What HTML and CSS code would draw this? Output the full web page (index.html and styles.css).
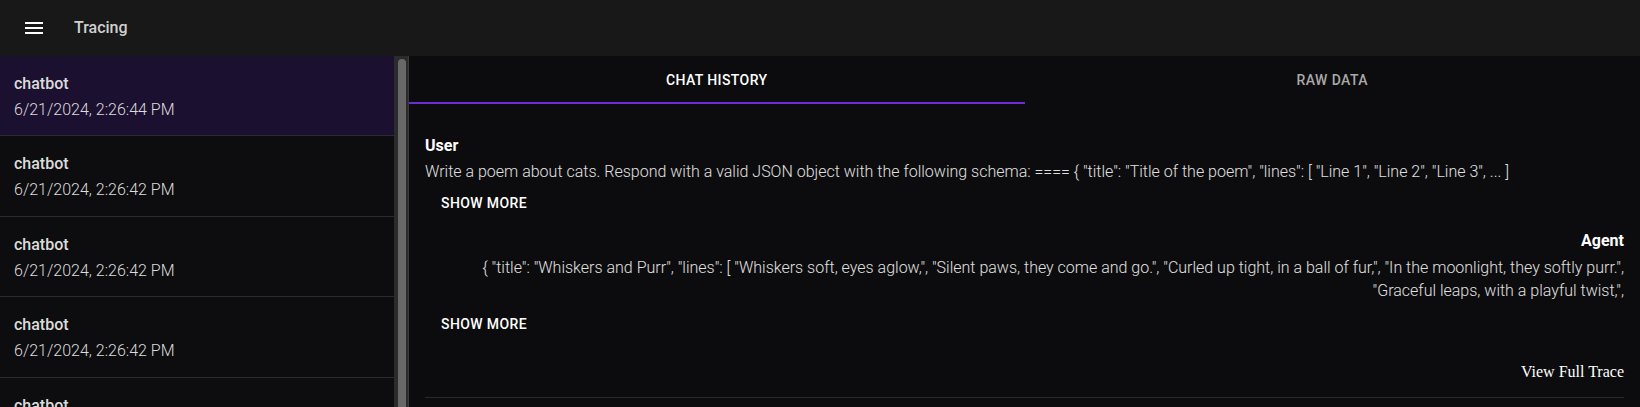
FILE: index.html
```html
<!DOCTYPE html>
<html lang="en">
<head>
<meta charset="utf-8">
<title>Tracing</title>
<link rel="stylesheet" href="styles.css">
</head>
<body>
<header class="appbar">
  <button class="menu-btn" aria-label="menu">
    <svg viewBox="0 0 24 24" width="24" height="24"><path fill="#fff" d="M3 18h18v-2H3zm0-5h18v-2H3zm0-7v2h18V6z"/></svg>
  </button>
  <div class="app-title">Tracing</div>
</header>
<div class="layout">
  <aside class="sidebar">
    <div class="trace-item selected"><div class="trace-name">chatbot</div><div class="trace-date">6/21/2024, 2:26:44 PM</div></div>
    <div class="trace-item"><div class="trace-name">chatbot</div><div class="trace-date">6/21/2024, 2:26:42 PM</div></div>
    <div class="trace-item"><div class="trace-name">chatbot</div><div class="trace-date">6/21/2024, 2:26:42 PM</div></div>
    <div class="trace-item"><div class="trace-name">chatbot</div><div class="trace-date">6/21/2024, 2:26:42 PM</div></div>
    <div class="trace-item"><div class="trace-name">chatbot</div><div class="trace-date">6/21/2024, 2:26:42 PM</div></div>
  </aside>
  <div class="scrolltrack"><div class="scrollthumb"></div></div>
  <main class="main">
    <nav class="tabs">
      <div class="tab active">Chat History</div>
      <div class="tab">Raw Data</div>
    </nav>
    <section class="chat">
      <div class="msg user">
        <div class="role">User</div>
        <div class="msg-text">Write a poem about cats. Respond with a valid JSON object with the following schema: ==== { "title": "Title of the poem", "lines": [ "Line 1", "Line 2", "Line 3", ... ]</div>
        <button class="show-more">Show More</button>
      </div>
      <div class="msg agent">
        <div class="role">Agent</div>
        <div class="msg-text">{ "title": "Whiskers and Purr", "lines": [ "Whiskers soft, eyes aglow,", "Silent paws, they come and go.", "Curled up tight, in a ball of fur,", "In the moonlight, they softly purr.", "Graceful leaps, with a playful twist,",</div>
        <button class="show-more">Show More</button>
      </div>
      <div class="trace-link-row"><button class="trace-link">View Full Trace</button></div>
      <div class="divider"></div>
    </section>
  </main>
</div>
</body>
</html>
```

FILE: styles.css
```css
* { box-sizing: border-box; }
html, body { margin: 0; padding: 0; }
body {
  width: 1640px;
  height: 407px;
  overflow: hidden;
  background: #0c0c0e;
  color: #e2e2e2;
  font-family: Roboto, "Liberation Sans", sans-serif;
}
.appbar {
  height: 56px;
  background: #181818;
  display: flex;
  align-items: center;
  padding-left: 22px;
}
.menu-btn {
  background: none;
  border: 0;
  padding: 0;
  width: 24px;
  height: 24px;
  display: flex;
}
.app-title {
  margin-left: 28px;
  font-size: 16px;
  font-weight: 500;
  color: #d0d0d0;
  margin-top: -2px;
}
.layout {
  display: flex;
  height: 351px;
}
.sidebar {
  width: 394px;
  flex: none;
  overflow: hidden;
  background: #0d0d0f;
}
.trace-item {
  height: 80.4px;
  padding: 16px 14px 0;
  border-bottom: 1px solid #2c2c2c;
  color: #dcdcdc;
}
.trace-item.selected { background: #1b1030; }
.trace-name {
  font-size: 16px;
  font-weight: 500;
  line-height: 24px;
}
.trace-date {
  font-size: 16px;
  font-weight: 300;
  line-height: 26px;
  margin-top: 1px;
}
.scrolltrack {
  width: 15px;
  flex: none;
  background: #2b2b2b;
  padding: 3px 3px 0 4px;
  border-right: 1px solid #3a3a3a;
}
.scrollthumb {
  width: 8px;
  height: 100%;
  background: #686868;
  border-radius: 4px 4px 0 0;
}
.main {
  flex: 1;
  min-width: 0;
  background: #0c0c0e;
}
.tabs {
  display: flex;
  height: 48px;
}
.tab {
  flex: 1;
  display: flex;
  align-items: center;
  justify-content: center;
  text-transform: uppercase;
  font-size: 14px;
  font-weight: 500;
  letter-spacing: 0.4px;
  color: #a9a9a9;
}
.tab.active {
  color: #fff;
  border-bottom: 2px solid #6e2bd9;
  padding-top: 2px;
}
.chat {
  padding: 30px 16px 0;
}
.role {
  font-size: 16px;
  font-weight: 700;
  line-height: 24px;
  color: #fff;
}
.msg-text {
  font-size: 16px;
  font-weight: 300;
  line-height: 22.5px;
  color: #e0e0e0;
  margin-top: 3px;
}
.agent { text-align: right; margin-top: 8px; }
.agent .msg-text { margin-top: 4px; }
.show-more {
  display: block;
  background: none;
  border: 0;
  font-family: Roboto, "Liberation Sans", sans-serif;
  font-size: 14px;
  font-weight: 500;
  letter-spacing: 0.4px;
  line-height: 24.5px;
  text-transform: uppercase;
  color: #fff;
  padding: 6px 8px;
  margin: 1px 0 0 8px;
}
.agent .show-more { margin-top: 4px; }
.trace-link-row {
  display: flex;
  justify-content: flex-end;
  margin-top: 19px;
}
.trace-link {
  background: none;
  border: 0;
  padding: 0;
  font-family: "Liberation Serif", serif;
  font-size: 16px;
  color: #fff;
  line-height: 20px;
}
.divider {
  height: 1px;
  background: #2a2a2a;
  margin-top: 15px;
}
```
